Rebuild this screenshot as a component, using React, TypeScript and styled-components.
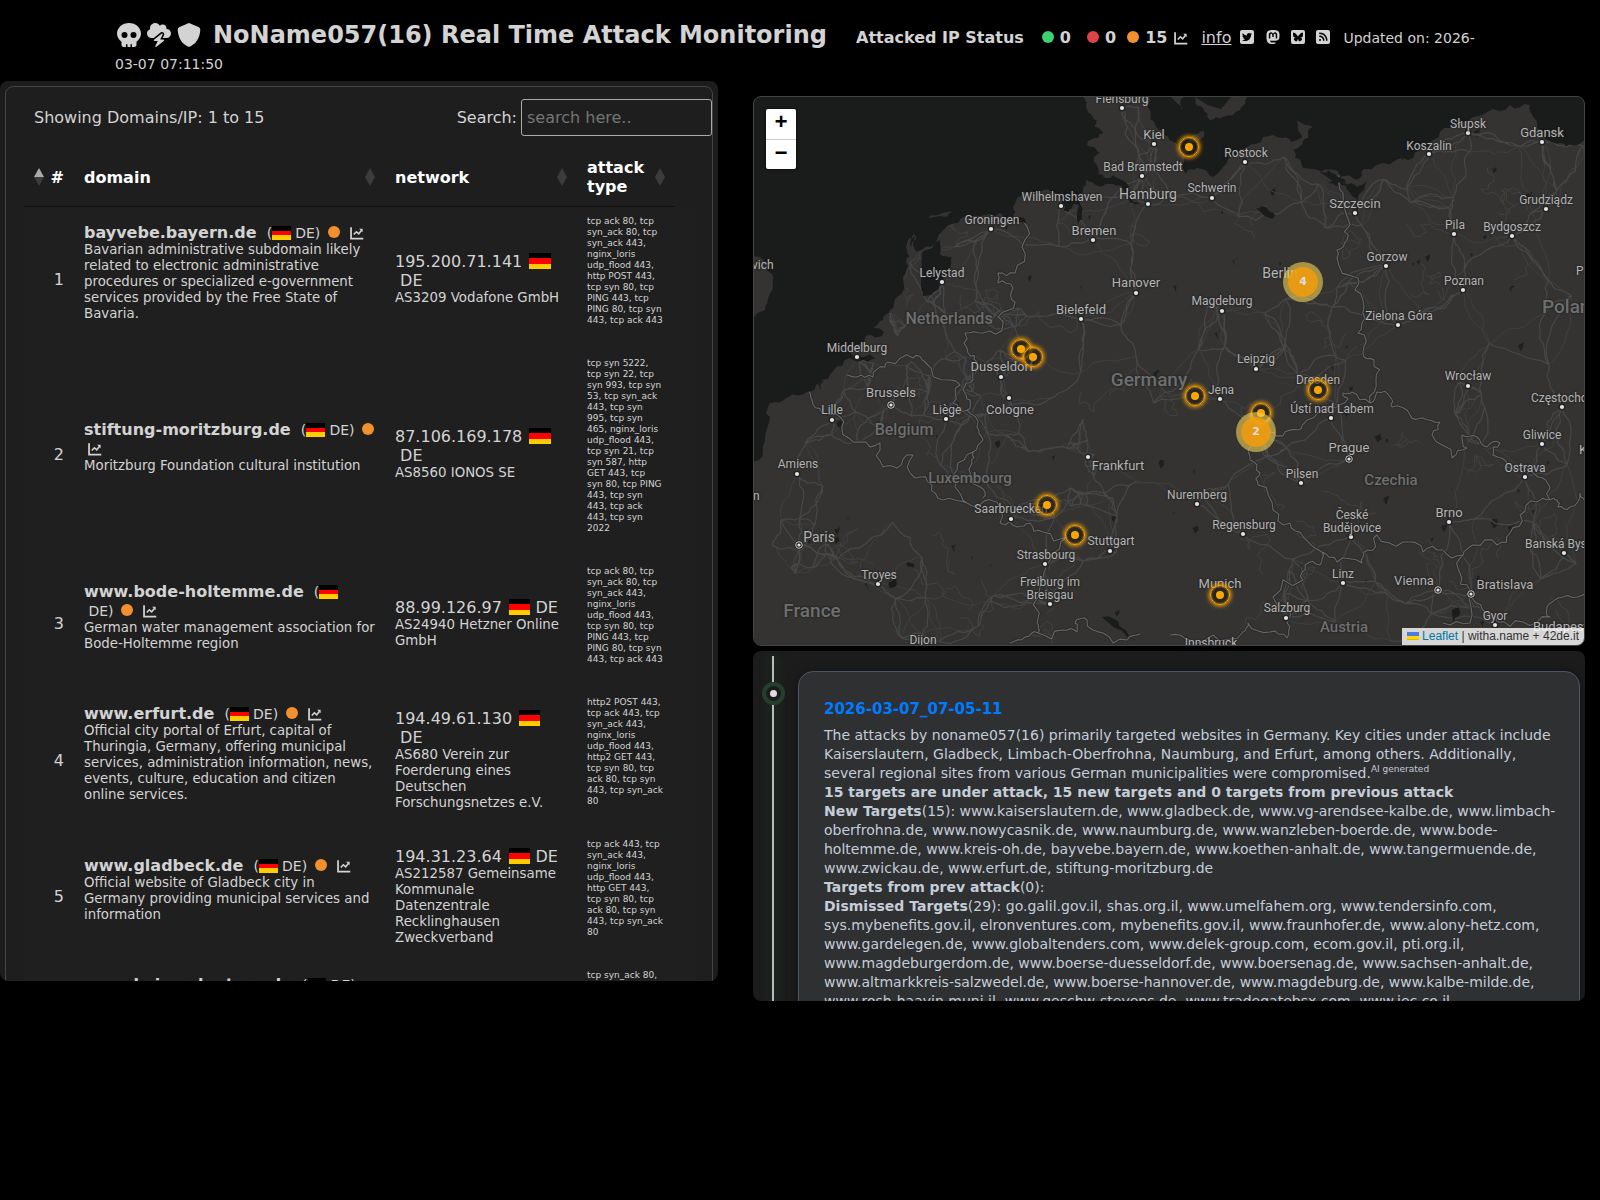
import React from "react";
import styled, { createGlobalStyle } from "styled-components";
import {
  FaSkull,
  FaCloudBolt,
  FaShield,
  FaCircle,
  FaSquareTwitter,
  FaMastodon,
  FaBluesky,
  FaSquareRss,
} from "react-icons/fa6";

/* ------------------------------------------------------------------ */
/* Base                                                                */
/* ------------------------------------------------------------------ */

const GlobalStyle = createGlobalStyle`
  * { box-sizing: border-box; }
  body {
    margin: 0;
    background: #000;
    color: #d3d3d3;
    font-family: Verdana, "DejaVu Sans", sans-serif;
    font-size: 16px;
  }
`;

const palette = {
  up: "#3dd16f",
  down: "#dd4449",
  unknown: "#f2902f",
};

/* ------------------------------------------------------------------ */
/* Header                                                              */
/* ------------------------------------------------------------------ */

const Header = styled.header`
  padding: 22px 115px 0;
  min-height: 81px;
  line-height: 26px;

  svg {
    vertical-align: -2px;
  }
`;

const Logo = styled.span`
  display: inline-flex;
  gap: 6px;
  padding: 0 2px;
  margin-right: 10px;
  font-size: 24px;
  vertical-align: -4px;
`;

const Title = styled.h1`
  display: inline;
  margin: 0 24px 0 0;
  font-size: 24px;
  font-weight: bold;
`;

const Status = styled.strong`
  margin-right: 18px;
`;

const Count = styled.strong<{ $gap: number }>`
  margin-right: ${(p) => p.$gap}px;

  svg {
    margin-right: 6px;
    font-size: 12px;
    vertical-align: 0;
  }
`;

const InfoLink = styled.a`
  margin: 0 8px 0 13px;
  color: inherit;
`;

const SocialLink = styled.a`
  margin-right: 10px;
  color: inherit;
`;

const BlueskyTile = styled.span`
  display: inline-flex;
  align-items: center;
  justify-content: center;
  width: 14px;
  height: 14px;
  border-radius: 2px;
  background: #d3d3d3;
  color: #000;
  font-size: 10px;
  line-height: 0;
  vertical-align: 1px;
`;

const Updated = styled.span`
  margin-left: 2px;
  font-size: 14px;
`;

const ChartIcon = () => (
  <svg width="14" height="14" viewBox="0 0 16 16" fill="none" aria-hidden="true">
    <path d="M1.2 1.5v12.8h14" stroke="currentColor" strokeWidth="2" />
    <path d="M4.3 9.8l3-3.2 2.6 2.3 3.4-4" stroke="currentColor" strokeWidth="1.8" />
    <path d="M10.4 3.2h4v4z" fill="currentColor" />
  </svg>
);

/* ------------------------------------------------------------------ */
/* Page grid                                                           */
/* ------------------------------------------------------------------ */

const Columns = styled.main`
  display: grid;
  grid-template-columns: 718fr 832fr;
  gap: 35px;
  align-items: start;
  padding-right: 15px;
`;

const Panel = styled.section`
  overflow: auto;
  scrollbar-width: none;
  border-radius: 8px;
  background: #1c1c1c;
`;

const TargetsPanel = styled(Panel)`
  height: 75vh;
  padding: 5px;
`;

const TargetsBox = styled.div`
  padding-top: 12px;
  border: 1px solid #444;
  border-radius: 8px;
  background: #1e1e1e;
`;

const SideColumn = styled.div`
  display: flex;
  flex-direction: column;
  gap: 5px;
  padding-top: 15px;
`;

/* ------------------------------------------------------------------ */
/* Targets table                                                       */
/* ------------------------------------------------------------------ */

const Toolbar = styled.div`
  display: flex;
  align-items: center;
  justify-content: space-between;
  margin-bottom: 12px;
  padding-left: 28px;
`;

const SearchLabel = styled.label`
  display: flex;
  align-items: center;
  gap: 4px;
`;

const SearchInput = styled.input`
  width: 191px;
  height: 37px;
  padding: 5px;
  border: 1px solid #aaa;
  border-radius: 3px;
  background: transparent;
  color: inherit;
  font: inherit;

  &::placeholder {
    color: #757575;
  }
`;

const TableWrap = styled.div`
  padding: 0 17px 0 18px;
`;

const Table = styled.table`
  width: 100%;
  table-layout: fixed;
  border-collapse: separate;
  border-spacing: 0;
`;

const Th = styled.th`
  padding: 10px;
  border-bottom: 1px solid #111;
  color: #fff;
  text-align: left;
`;

const SortButton = styled.button`
  display: flex;
  align-items: center;
  justify-content: space-between;
  gap: 6px;
  width: 100%;
  padding: 0;
  border: 0;
  background: none;
  color: inherit;
  font: inherit;
  line-height: 19px;
  text-align: left;
`;

const SortMark = styled.span<{ $asc?: boolean }>`
  flex: none;
  display: grid;

  &::before,
  &::after {
    content: "";
    border: 5px solid transparent;
  }
  &::before {
    border-top: 0;
    border-bottom: 9px solid ${(p) => (p.$asc ? "#aaa" : "#3c3c3c")};
  }
  &::after {
    border-bottom: 0;
    border-top: 9px solid #3c3c3c;
  }
`;

const Td = styled.td`
  padding: 9px 10px 7px;
  background: #1f1f1f;
  line-height: 19px;
`;

const IndexTd = styled(Td)`
  text-align: right;
`;

const DomainTd = styled(Td)`
  padding-bottom: 21px;
`;

const AttackTd = styled(Td)`
  padding-right: 32px;
  padding-bottom: 23px;
  font-size: 9px;
  line-height: 11px;
`;

const Note = styled.small`
  display: block;
  line-height: 16px;
`;

const Country = styled.span`
  margin-left: 5px;
  font-size: 14px;
  line-height: 14px;
`;

const Flag = styled.span`
  display: inline-block;
  width: 1.3333em;
  height: 1em;
  background: linear-gradient(#000 33.3%, #f00 33.3% 66.6%, #fc0 66.6%);
  vertical-align: -2px;
`;

const NetworkFlag = styled(Flag)`
  margin-left: 2px;
`;

const StateDot = styled(FaCircle)`
  margin-left: -1px;
  color: ${palette.unknown};
  font-size: 12px;
`;

const ChartLink = styled.a`
  color: inherit;
  font-size: 14px;
  line-height: 14px;
  text-decoration: none;

  svg {
    vertical-align: -2px;
  }
`;

type Target = {
  domain: string;
  note: string;
  ip: string;
  network: string;
  attacks: string;
};

const targets: Target[] = [
  {
    domain: "bayvebe.bayern.de",
    note: "Bavarian administrative subdomain likely related to electronic administrative procedures or specialized e-government services provided by the Free State of Bavaria.",
    ip: "195.200.71.141",
    network: "AS3209 Vodafone GmbH",
    attacks:
      "tcp ack 80, tcp syn_ack 80, tcp syn_ack 443, nginx_loris udp_flood 443, http POST 443, tcp syn 80, tcp PING 443, tcp PING 80, tcp syn 443, tcp ack 443",
  },
  {
    domain: "stiftung-moritzburg.de",
    note: "Moritzburg Foundation cultural institution",
    ip: "87.106.169.178",
    network: "AS8560 IONOS SE",
    attacks:
      "tcp syn 5222, tcp syn 22, tcp syn 993, tcp syn 53, tcp syn_ack 443, tcp syn 995, tcp syn 465, nginx_loris udp_flood 443, tcp syn 21, tcp syn 587, http GET 443, tcp syn 80, tcp PING 443, tcp syn 443, tcp ack 443, tcp syn 2022",
  },
  {
    domain: "www.bode-holtemme.de",
    note: "German water management association for Bode-Holtemme region",
    ip: "88.99.126.97",
    network: "AS24940 Hetzner Online GmbH",
    attacks:
      "tcp ack 80, tcp syn_ack 80, tcp syn_ack 443, nginx_loris udp_flood 443, tcp syn 80, tcp PING 443, tcp PING 80, tcp syn 443, tcp ack 443",
  },
  {
    domain: "www.erfurt.de",
    note: "Official city portal of Erfurt, capital of Thuringia, Germany, offering municipal services, administration information, news, events, culture, education and citizen online services.",
    ip: "194.49.61.130",
    network: "AS680 Verein zur Foerderung eines Deutschen Forschungsnetzes e.V.",
    attacks:
      "http2 POST 443, tcp ack 443, tcp syn_ack 443, nginx_loris udp_flood 443, http2 GET 443, tcp syn 80, tcp ack 80, tcp syn 443, tcp syn_ack 80",
  },
  {
    domain: "www.gladbeck.de",
    note: "Official website of Gladbeck city in Germany providing municipal services and information",
    ip: "194.31.23.64",
    network: "AS212587 Gemeinsame Kommunale Datenzentrale Recklinghausen Zweckverband",
    attacks:
      "tcp ack 443, tcp syn_ack 443, nginx_loris udp_flood 443, http GET 443, tcp syn 80, tcp ack 80, tcp syn 443, tcp syn_ack 80",
  },
  {
    domain: "www.kaiserslautern.de",
    note: "Official website of the city of Kaiserslautern in Germany, offering municipal services, administration information, news, events and citizen online services.",
    ip: "212.0.98.100",
    network: "AS8767 M-net Telekommunikations GmbH",
    attacks:
      "tcp syn_ack 80, nginx_loris udp_flood 443, tcp ack 443, tcp syn_ack 443, http2 GET 443, tcp syn 80, tcp PING 443, tcp ack 80, tcp syn 443",
  },
];

const TargetRow = ({ target, index }: { target: Target; index: number }) => (
  <tr>
    <IndexTd>{index}</IndexTd>
    <DomainTd>
      <strong>{target.domain}</strong>{" "}
      <Country>
        (<Flag />
        &nbsp;DE)&nbsp;&nbsp;
        <StateDot />
      </Country>{" "}
      <ChartLink href="#chart" aria-label={`History of ${target.domain}`}>
        &nbsp;
        <ChartIcon />
      </ChartLink>
      <Note>{target.note}</Note>
    </DomainTd>
    <Td>
      {target.ip} <NetworkFlag />
      &nbsp;DE
      <Note>{target.network}</Note>
    </Td>
    <AttackTd colSpan={2}>{target.attacks}</AttackTd>
  </tr>
);

const TargetsTable = () => (
  <Table>
    <colgroup>
      <col style={{ width: 50 }} />
      <col />
      <col style={{ width: 192 }} />
      <col style={{ width: 98 }} />
      <col style={{ width: 20 }} />
    </colgroup>
    <thead>
      <tr>
        <Th scope="col">
          <SortButton type="button">
            <SortMark $asc />#
          </SortButton>
        </Th>
        {["domain", "network", "attack type"].map((name) => (
          <Th scope="col" key={name}>
            <SortButton type="button">
              {name}
              <SortMark />
            </SortButton>
          </Th>
        ))}
        <td />
      </tr>
    </thead>
    <tbody>
      {targets.map((target, i) => (
        <TargetRow key={target.domain} target={target} index={i + 1} />
      ))}
    </tbody>
  </Table>
);

/* ------------------------------------------------------------------ */
/* Map                                                                 */
/* ------------------------------------------------------------------ */

type Point = [number, number];

/* World pixel coordinates of the map pane's top left corner. */
const ORIGIN: Point = [754, 97];
const VIEW: Point = [830, 548];

const mainland: Point[] = [
  [1083, 97], [1086, 106], [1087, 110], [1091, 114], [1097, 120], [1095, 127], [1103, 132], [1098, 138],
  [1087, 145], [1096, 149], [1100, 153], [1094, 158], [1097, 166], [1098, 174], [1106, 178], [1120, 179],
  [1128, 190], [1134, 202], [1140, 205], [1131, 203], [1124, 191], [1113, 184], [1098, 186], [1087, 180],
  [1083, 190], [1080, 200], [1082, 212], [1078, 224], [1079, 206], [1074, 204], [1068, 212], [1063, 211],
  [1062, 200], [1056, 193], [1040, 193], [1023, 192], [1017, 199], [1013, 207], [1013, 217], [1026, 221],
  [1028, 229], [1019, 222], [1006, 221], [1000, 213], [980, 216], [963, 217], [952, 224], [943, 230],
  [937, 240], [922, 250], [917, 252], [915, 237], [910, 238], [907, 250], [906, 262], [903, 277],
  [897, 297], [890, 310], [883, 320], [873, 327], [884, 332], [878, 337], [866, 336], [860, 344],
  [848, 346], [858, 356], [870, 354], [880, 360], [868, 362], [850, 358], [833, 371], [820, 383],
  [807, 392], [788, 397], [770, 403], [766, 413], [766, 432], [763, 452], [752, 462], [752, 647],
  [1586, 647], [1586, 141], [1573, 145], [1560, 143], [1547, 140], [1539, 130], [1534, 118], [1530, 105],
  [1510, 105], [1487, 112], [1468, 121], [1450, 128], [1433, 140], [1420, 150], [1403, 158], [1384, 163],
  [1367, 169], [1360, 178], [1345, 176], [1335, 174], [1322, 172], [1303, 168], [1295, 158], [1290, 148],
  [1300, 146], [1308, 138], [1313, 127], [1297, 121], [1298, 129], [1302, 137], [1291, 142], [1283, 138],
  [1263, 137], [1247, 147], [1236, 155], [1227, 163], [1213, 177], [1204, 170], [1197, 168], [1186, 174],
  [1184, 162], [1200, 140], [1204, 131], [1196, 134], [1183, 150], [1174, 142], [1163, 130], [1150, 119],
  [1148, 108], [1149, 97],
];

const islands: Point[][] = [
  [[752, 253], [765, 262], [769, 272], [773, 283], [769, 296], [765, 310], [752, 320]],
  [[1195, 97], [1247, 97], [1245, 101], [1240, 110], [1223, 117], [1210, 120], [1203, 108], [1196, 104]],
  [[910, 244], [914, 234], [916, 239], [912, 248]],
  [[928, 218], [942, 213], [952, 212], [940, 216]],
  [[1171, 97], [1184, 97], [1182, 110], [1177, 103]],
  [[1320, 172], [1340, 176], [1347, 184], [1334, 182]],
];

const lakes: Point[][] = [
  [[922, 252], [940, 240], [940, 254], [952, 257], [950, 266], [943, 278], [938, 290], [923, 296], [921, 284]],
  [[1340, 177], [1344, 183], [1357, 187], [1367, 180], [1362, 192], [1356, 202], [1358, 212], [1352, 196], [1346, 186], [1328, 183]],
  [[1256, 208], [1266, 207], [1275, 215], [1272, 219], [1262, 213]],
  [[906, 563], [913, 563], [914, 568], [908, 567]],
  [[888, 584], [896, 579], [897, 584], [890, 588]],
  [[1102, 617], [1112, 618], [1122, 628], [1136, 640], [1128, 638], [1112, 626]],
  [[1452, 610], [1459, 607], [1460, 614], [1453, 622]],
];

const borders: Point[][] = [
  [[1022, 220], [1022, 247], [1015, 273], [998, 273], [998, 283], [1013, 288], [1015, 302], [998, 317], [1003, 324], [983, 333], [965, 333], [968, 353], [977, 362], [973, 380], [963, 390], [970, 400], [967, 410], [977, 427], [983, 440], [973, 452], [972, 463], [980, 487], [983, 498]],
  [[973, 452], [957, 470], [955, 487], [967, 503], [983, 502], [990, 500], [1000, 523], [1017, 527], [1030, 523], [1043, 532], [1067, 537], [1050, 560], [1040, 587], [1037, 623], [1038, 633]],
  [[810, 388], [812, 400], [822, 413], [840, 417], [842, 428], [860, 442], [880, 443], [883, 467], [897, 468], [913, 455], [915, 478], [932, 485], [943, 500], [967, 503]],
  [[847, 375], [857, 377], [873, 377], [885, 367], [888, 362], [913, 358], [925, 362], [950, 380], [960, 385], [953, 403], [967, 410]],
  [[1038, 633], [1025, 637], [1010, 643]],
  [[1038, 633], [1063, 630], [1077, 632], [1075, 623], [1087, 620], [1103, 633], [1127, 640], [1140, 634]],
  [[1339, 175], [1343, 193], [1350, 225], [1347, 240], [1337, 250], [1337, 258], [1358, 278], [1355, 290], [1363, 313], [1358, 333], [1363, 353], [1374, 360], [1376, 380], [1370, 403]],
  [[1370, 403], [1352, 392], [1343, 393], [1348, 399], [1330, 406], [1307, 420], [1298, 430], [1283, 436], [1270, 432], [1248, 450], [1250, 460], [1260, 473], [1258, 485], [1273, 510], [1290, 523], [1303, 537], [1322, 552]],
  [[1322, 552], [1337, 562], [1362, 563], [1363, 552], [1373, 550], [1377, 535], [1403, 542], [1423, 552], [1443, 550], [1463, 555]],
  [[1322, 552], [1320, 565], [1305, 565], [1303, 580], [1273, 597], [1287, 623], [1287, 638], [1270, 632], [1248, 623], [1243, 632], [1213, 635], [1190, 640], [1170, 635]],
  [[1463, 555], [1460, 573], [1470, 590], [1470, 623], [1443, 623]],
  [[1463, 555], [1473, 545], [1497, 545], [1510, 533], [1520, 515], [1537, 502], [1550, 499]],
  [[1370, 403], [1377, 392], [1390, 397], [1392, 407], [1410, 415], [1423, 418], [1440, 422], [1432, 435], [1452, 458], [1467, 448], [1462, 435], [1477, 437], [1487, 447], [1500, 443], [1493, 455], [1507, 467], [1538, 477], [1550, 487], [1550, 500], [1557, 500], [1558, 507], [1570, 507], [1580, 493], [1584, 500]],
  [[1472, 598], [1487, 613], [1497, 622], [1523, 622], [1550, 617], [1547, 607], [1558, 598], [1578, 597], [1584, 590]],
];

type Place = {
  name: string;
  at: Point;
  size?: number;
  dot?: Point;
  capital?: boolean;
  country?: boolean;
  left?: boolean;
};

const places: Place[] = [
  { name: "Flensburg", at: [1122, 99], dot: [1122, 108] },
  { name: "Kiel", at: [1154, 135], size: 13, dot: [1154, 144] },
  { name: "Bad Bramstedt", at: [1143, 167], dot: [1142, 176] },
  { name: "Hamburg", at: [1148, 194], size: 14, dot: [1148, 204] },
  { name: "Wilhelmshaven", at: [1062, 197], dot: [1061, 206] },
  { name: "Groningen", at: [992, 220], dot: [991, 229] },
  { name: "Bremen", at: [1094, 231], size: 13, dot: [1093, 240] },
  { name: "vich", at: [752, 265], left: true },
  { name: "Lelystad", at: [942, 273], dot: [942, 282] },
  { name: "Hanover", at: [1136, 283], size: 13, dot: [1136, 293] },
  { name: "Bielefeld", at: [1081, 310], size: 13, dot: [1081, 319] },
  { name: "Netherlands", at: [949, 319], size: 16, country: true },
  { name: "Middelburg", at: [857, 348], dot: [857, 357] },
  { name: "Dusseldorf", at: [1002, 367], size: 13, dot: [1001, 377] },
  { name: "Rostock", at: [1246, 153], dot: [1245, 162] },
  { name: "Schwerin", at: [1212, 188], dot: [1212, 198] },
  { name: "Słupsk", at: [1468, 124], dot: [1468, 133] },
  { name: "Gdansk", at: [1542, 133], size: 13, dot: [1542, 142] },
  { name: "Koszalin", at: [1429, 146], dot: [1429, 154] },
  { name: "Szczecin", at: [1355, 204], size: 13, dot: [1355, 213] },
  { name: "Grudziądz", at: [1546, 200], dot: [1546, 209] },
  { name: "Pila", at: [1455, 225], dot: [1454, 234] },
  { name: "Bydgoszcz", at: [1512, 227], dot: [1512, 236] },
  { name: "Gorzow", at: [1387, 257], dot: [1386, 266] },
  { name: "Berlin", at: [1280, 273], size: 14 },
  { name: "Poznan", at: [1464, 281], dot: [1463, 290] },
  { name: "Po", at: [1576, 271], left: true },
  { name: "Magdeburg", at: [1222, 301], dot: [1222, 311] },
  { name: "Poland", at: [1542, 307], size: 19, country: true, left: true },
  { name: "Zielona Góra", at: [1399, 316], dot: [1398, 325] },
  { name: "Leipzig", at: [1256, 359], dot: [1256, 369] },
  { name: "Brussels", at: [891, 393], size: 13, dot: [891, 405], capital: true },
  { name: "Lille", at: [832, 410], dot: [832, 420] },
  { name: "Liège", at: [947, 410], dot: [946, 419] },
  { name: "Belgium", at: [904, 430], size: 16, country: true },
  { name: "Cologne", at: [1010, 410], size: 13, dot: [1009, 398] },
  { name: "Germany", at: [1149, 380], size: 19, country: true },
  { name: "Amiens", at: [798, 464], dot: [797, 474] },
  { name: "Luxembourg", at: [970, 478], size: 15, country: true },
  { name: "Frankfurt", at: [1118, 466], size: 13, dot: [1088, 457] },
  { name: "n", at: [753, 496], left: true },
  { name: "Saarbruecken", at: [1011, 509], dot: [1011, 519] },
  { name: "Paris", at: [819, 537], size: 14, dot: [799, 545], capital: true },
  { name: "Troyes", at: [879, 575], dot: [878, 584] },
  { name: "Stuttgart", at: [1111, 541], dot: [1110, 551] },
  { name: "Strasbourg", at: [1046, 555], dot: [1045, 564] },
  { name: "Freiburg im", at: [1050, 582] },
  { name: "Breisgau", at: [1050, 595], dot: [1050, 604] },
  { name: "France", at: [812, 611], size: 19, country: true },
  { name: "Dijon", at: [923, 640], size: 12 },
  { name: "Jena", at: [1221, 390], dot: [1220, 399] },
  { name: "Dresden", at: [1318, 380] },
  { name: "Ústí nad Labem", at: [1332, 409], dot: [1331, 418] },
  { name: "Wrocław", at: [1468, 376], size: 12, dot: [1468, 386] },
  { name: "Częstochowa", at: [1531, 398], dot: [1562, 407], left: true },
  { name: "Prague", at: [1349, 448], size: 13, dot: [1349, 459], capital: true },
  { name: "Gliwice", at: [1542, 435], dot: [1542, 444] },
  { name: "Kr", at: [1579, 450], size: 13, left: true },
  { name: "Ostrava", at: [1525, 468], dot: [1525, 477] },
  { name: "Pilsen", at: [1302, 474], dot: [1301, 483] },
  { name: "Czechia", at: [1391, 480], size: 15, country: true },
  { name: "Nuremberg", at: [1197, 495], size: 12, dot: [1197, 504] },
  { name: "Brno", at: [1449, 513], size: 13, dot: [1449, 522] },
  { name: "České", at: [1352, 515] },
  { name: "Budějovice", at: [1352, 528], dot: [1351, 537] },
  { name: "Regensburg", at: [1244, 525], dot: [1243, 534] },
  { name: "Banská Bystrica", at: [1525, 544], dot: [1564, 553], left: true },
  { name: "Linz", at: [1343, 574], dot: [1343, 583] },
  { name: "Munich", at: [1220, 584], size: 13 },
  { name: "Vienna", at: [1414, 581], size: 13, dot: [1438, 590], capital: true },
  { name: "Bratislava", at: [1505, 585], size: 13, dot: [1471, 594], capital: true },
  { name: "Salzburg", at: [1287, 608], dot: [1286, 618] },
  { name: "Gyor", at: [1495, 616], dot: [1495, 625] },
  { name: "Austria", at: [1344, 627], size: 15, country: true },
  { name: "Budapest", at: [1533, 627], size: 13, left: true },
  { name: "Innsbruck", at: [1211, 643] },
];

const pins: Point[] = [
  [1189, 147], [1021, 349], [1033, 357], [1195, 396], [1261, 413],
  [1318, 390], [1047, 505], [1075, 535], [1220, 595],
];

const clusters: { at: Point; count: number }[] = [
  { at: [1303, 282], count: 4 },
  { at: [1256, 432], count: 2 },
];

/* Small deterministic generator, so that the terrain is the same on every render. */
const makeRandom = (seed: number) => {
  let s = seed;
  return () => {
    s = (s * 1664525 + 1013904223) % 4294967296;
    return s / 4294967296;
  };
};

/* Longer segments are the edges of the sheet and stay straight. */
const LONGEST = 120;

const roughen = (points: Point[], amount: number, depth: number, random: () => number): Point[] => {
  if (depth === 0) return points;
  const out: Point[] = [points[0]];
  for (let i = 1; i < points.length; i++) {
    const [ax, ay] = points[i - 1];
    const [bx, by] = points[i];
    const length = Math.hypot(bx - ax, by - ay);
    if (length > 0 && length < LONGEST) {
      const shift = (random() - 0.5) * amount;
      out.push([(ax + bx) / 2 - shift * (by - ay), (ay + by) / 2 + shift * (bx - ax)]);
    }
    out.push(points[i]);
  }
  return roughen(out, amount, depth - 1, random);
};

const toPath = (points: Point[], closed = false) =>
  points.map(([x, y], i) => `${i ? "L" : "M"}${x.toFixed(1)} ${y.toFixed(1)}`).join("") + (closed ? "Z" : "");

const contains = (polygon: Point[], [x, y]: Point) => {
  let inside = false;
  for (let i = 0, j = polygon.length - 1; i < polygon.length; j = i++) {
    const [xi, yi] = polygon[i];
    const [xj, yj] = polygon[j];
    if (yi > y !== yj > y && x < ((xj - xi) * (y - yi)) / (yj - yi) + xi) inside = !inside;
  }
  return inside;
};

const buildTerrain = () => {
  const random = makeRandom(57);
  const coast = toPath(roughen(mainland, 0.5, 2, random), true);
  const isles = islands.map((p) => toPath(roughen(p, 0.5, 2, random), true)).join("");
  const water = lakes.map((p) => toPath(roughen(p, 0.4, 2, random), true)).join("");
  const frontier = borders.map((p) => toPath(roughen(p, 0.6, 2, random))).join("");

  const towns: Point[] = places.filter((p) => p.dot).map((p) => p.dot as Point);
  const scatter = (count: number, x: number, y: number, w: number, h: number) => {
    for (let i = 0; i < count; i++) {
      const town: Point = [x + random() * w, y + random() * h];
      if (contains(mainland, town)) towns.push(town);
    }
  };
  scatter(150, 754, 97, 830, 548);
  scatter(45, 870, 290, 150, 150);
  scatter(22, 1050, 440, 50, 80);
  scatter(14, 770, 515, 60, 60);

  let major = "";
  let minor = "";
  towns.forEach((town, i) => {
    towns
      .map((other, j) => ({ j, other, d: Math.hypot(other[0] - town[0], other[1] - town[1]) }))
      .filter(({ j }) => j !== i)
      .sort((a, b) => a.d - b.d)
      .slice(0, 4)
      .forEach(({ j, other }, rank) => {
        if (j < i && rank < 2) return;
        const line = toPath(roughen([town, other], 0.3, 3, random));
        if (rank < 3) major += line;
        else minor += line;
      });
  });

  let ponds = "";
  for (let i = 0; i < 90; i++) {
    const x = 770 + random() * 800;
    const y = 110 + random() * 530;
    const w = 2 + random() * 5;
    ponds += toPath(roughen([[x, y], [x + w, y - w / 2], [x + w / 2, y + w]], 0.7, 1, random), true);
  }

  let districts = "";
  for (let i = 0; i < 46; i++) {
    let x = 780 + random() * 780;
    let y = 200 + random() * 430;
    const line: Point[] = [[x, y]];
    for (let k = 0; k < 5; k++) {
      x += (random() - 0.5) * 44;
      y += (random() - 0.5) * 44;
      line.push([x, y]);
    }
    districts += toPath(roughen(line, 0.7, 2, random));
  }
  return { coast, isles, water, frontier, major, minor, ponds, districts };
};

const terrain = buildTerrain();

const Terrain = () => (
  <svg
    width={VIEW[0]}
    height={VIEW[1]}
    viewBox={`${ORIGIN[0]} ${ORIGIN[1]} ${VIEW[0]} ${VIEW[1]}`}
    fill="none"
    strokeLinejoin="round"
    aria-hidden="true"
  >
    <clipPath id="land">
      <path d={terrain.coast + terrain.isles} />
    </clipPath>
    <path d={terrain.coast + terrain.isles} fill="#343332" />
    <g clipPath="url(#land)">
      <path d={terrain.ponds} fill="#1e201f" />
      <path d={terrain.districts} stroke="#414141" />
      <path d={terrain.minor} stroke="#3f3f3f" />
      <path d={terrain.major} stroke="#474747" strokeWidth="1.2" />
      <path d={terrain.water} fill="#1a1c1b" />
      <path d={terrain.frontier} stroke="#2b2b2b" strokeWidth="3" />
      <path d={terrain.frontier} stroke="#676767" strokeWidth="1.1" />
    </g>
    {places
      .filter((p) => p.dot)
      .map(({ name, dot, capital }) => (
        <g key={name} transform={`translate(${dot![0]} ${dot![1]})`}>
          <circle r={capital ? 4.5 : 3.5} fill="#222" />
          {capital && <circle r="3.3" stroke="#ccc" />}
          <circle r={capital ? 1.6 : 2.1} fill="#e4e4e4" />
        </g>
      ))}
  </svg>
);

const MapPanel = styled.section`
  position: relative;
  height: 550px;
  overflow: hidden;
  border: 1px solid #444;
  border-radius: 8px;
  background: #1a1c1b;
`;

const MapPane = styled.div`
  position: absolute;
  top: 0;
  left: 50%;
  width: ${VIEW[0]}px;
  height: ${VIEW[1]}px;
  margin-left: -${VIEW[0] / 2}px;
`;

/* Things pinned to a point of the map pane. */
const Pinned = styled.span.attrs<{ $at: Point }>((p) => ({
  style: { left: p.$at[0] - ORIGIN[0], top: p.$at[1] - ORIGIN[1] },
}))<{ $at: Point }>`
  position: absolute;
`;

const PlaceName = styled(Pinned)<{ $size: number; $country?: boolean; $left?: boolean }>`
  transform: translate(${(p) => (p.$left ? "0" : "-50%")}, -50%);
  color: ${(p) => (p.$country ? "#6f6f6f" : "#b4b4b4")};
  font-family: Roboto, sans-serif;
  font-size: ${(p) => p.$size}px;
  font-weight: ${(p) => (p.$country ? 500 : 400)};
  line-height: 16px;
  text-shadow: 0 0 2px #222, 0 0 2px #222;
  white-space: nowrap;
`;

const Pin = styled(Pinned)`
  display: grid;
  place-items: center;
  width: 20px;
  height: 20px;
  margin: -10px 0 0 -10px;
  border: 1px solid #ffa500;
  border-radius: 50%;
  background: rgba(30, 30, 30, 0.6);
  box-shadow: 0 0 4px 1px #ffa500, inset 0 0 2px #ffa500;

  &::before {
    content: "";
    width: 8px;
    height: 8px;
    border-radius: 50%;
    background: #ffa500;
  }
`;

const Cluster = styled(Pinned)`
  display: grid;
  place-items: center;
  width: 40px;
  height: 40px;
  margin: -20px 0 0 -20px;
  border-radius: 50%;
  background: rgba(241, 211, 87, 0.6);
`;

const ClusterCount = styled.b`
  width: 30px;
  height: 30px;
  border-radius: 50%;
  background: rgba(240, 156, 12, 0.88);
  color: #ddd;
  font-size: 11px;
  line-height: 30px;
  text-align: center;
`;

const ZoomBar = styled.div`
  position: absolute;
  top: 12px;
  left: 12px;
  display: grid;
  border-radius: 2px;
  overflow: hidden;
  box-shadow: 0 0 2px 1px #111;
`;

const ZoomButton = styled.button`
  width: 30px;
  height: 30px;
  padding: 0;
  border: 0;
  background: #fff;
  color: #000;
  font: bold 22px/30px "Liberation Mono", monospace;

  & + & {
    border-top: 1px solid #ccc;
  }
`;

const Attribution = styled.div`
  position: absolute;
  right: 0;
  bottom: 0;
  padding: 0 5px;
  background: rgba(255, 255, 255, 0.8);
  color: #333;
  font: 12px/17px "Liberation Sans", Arial, sans-serif;

  a {
    color: #0078a8;
    text-decoration: none;
  }
`;

const FlagIcon = () => (
  <svg width="12" height="8" viewBox="0 0 12 8" aria-hidden="true">
    <path fill="#4c7be1" d="M0 0h12v4H0z" />
    <path fill="#ffd500" d="M0 4h12v3H0z" />
    <path fill="#e0bc00" d="M0 7h12v1H0z" />
  </svg>
);

const AttackMap = () => (
  <MapPanel aria-label="Attack map">
    <MapPane>
      <Terrain />
      {places.map((p) => (
        <PlaceName key={p.name} $at={p.at} $size={p.size ?? 12} $country={p.country} $left={p.left}>
          {p.name}
        </PlaceName>
      ))}
      {pins.map((at) => (
        <Pin key={at.join()} $at={at} />
      ))}
      {clusters.map(({ at, count }) => (
        <Cluster key={count} $at={at}>
          <ClusterCount>{count}</ClusterCount>
        </Cluster>
      ))}
    </MapPane>
    <ZoomBar>
      <ZoomButton type="button" aria-label="Zoom in">+</ZoomButton>
      <ZoomButton type="button" aria-label="Zoom out">−</ZoomButton>
    </ZoomBar>
    <Attribution>
      <a href="#leaflet">
        <FlagIcon /> Leaflet
      </a>{" "}
      | witha.name + 42de.it
    </Attribution>
  </MapPanel>
);

/* ------------------------------------------------------------------ */
/* Timeline                                                            */
/* ------------------------------------------------------------------ */

const TimelinePanel = styled(Panel)`
  display: grid;
  grid-template-columns: 40px 1fr;
  gap: 5px;
  height: 350px;
  padding: 5px 5px 0 0;
`;

const Rail = styled.div`
  display: flex;
  flex-direction: column;
  align-items: center;

  &::before,
  &::after {
    content: "";
    width: 2px;
    background: #bbb;
    box-shadow: 0 0 12px 2px rgba(40, 110, 60, 0.25);
  }
  &::before {
    height: 26px;
  }
  &::after {
    flex: 1;
  }
`;

const RailDot = styled.span`
  display: grid;
  place-items: center;
  width: 23px;
  height: 23px;
  margin: 0 0 -4px;
  border: 4px solid #24402c;
  border-radius: 50%;
  background: #1c1c1c;
  z-index: 1;

  &::before {
    content: "";
    width: 7px;
    height: 7px;
    border-radius: 50%;
    background: #ddd;
  }
`;

const Card = styled.article`
  margin-top: 15px;
  padding: 25px 10px 25px 25px;
  border: 1px solid #4a5568;
  border-radius: 15px;
  background: #2e3032;
  box-shadow: 0 0 12px rgba(0, 0, 0, 0.35);
  color: #c5cdd8;
  font-size: 14px;
  line-height: 19px;
`;

const CardTitle = styled.h2`
  margin: 0 0 4px;
  font-size: 15px;
  line-height: 25px;
  color: #007bff;
`;

const Text = styled.p`
  margin: 0;
`;

const Source = styled.sup`
  font-size: 9px;
  line-height: 0;
`;

const newTargets =
  "www.kaiserslautern.de, www.gladbeck.de, www.vg-arendsee-kalbe.de, www.limbach-oberfrohna.de, www.nowycasnik.de, www.naumburg.de, www.wanzleben-boerde.de, www.bode-holtemme.de, www.kreis-oh.de, bayvebe.bayern.de, www.koethen-anhalt.de, www.tangermuende.de, www.zwickau.de, www.erfurt.de, stiftung-moritzburg.de";

const dismissedTargets =
  "go.galil.gov.il, shas.org.il, www.umelfahem.org, www.tendersinfo.com, sys.mybenefits.gov.il, elronventures.com, mybenefits.gov.il, www.fraunhofer.de, www.alony-hetz.com, www.gardelegen.de, www.globaltenders.com, www.delek-group.com, ecom.gov.il, pti.org.il, www.magdeburgerdom.de, www.boerse-duesseldorf.de, www.boersenag.de, www.sachsen-anhalt.de, www.altmarkkreis-salzwedel.de, www.boerse-hannover.de, www.magdeburg.de, www.kalbe-milde.de, www.rosh-haayin.muni.il, www.geschw-stevens.de, www.tradegatebsx.com, www.iec.co.il";

const Timeline = () => (
  <TimelinePanel aria-label="Attack timeline">
    <Rail>
      <RailDot />
    </Rail>
    <Card>
      <CardTitle>2026-03-07_07-05-11</CardTitle>
      <Text>
        The attacks by noname057(16) primarily targeted websites in Germany. Key cities under attack include
        Kaiserslautern, Gladbeck, Limbach-Oberfrohna, Naumburg, and Erfurt, among others. Additionally, several
        regional sites from various German municipalities were compromised.<Source>AI generated</Source>
      </Text>
      <Text>
        <b>15 targets are under attack, 15 new targets and 0 targets from previous attack</b>
      </Text>
      <Text>
        <b>New Targets</b>(15): {newTargets}
      </Text>
      <Text>
        <b>Targets from prev attack</b>(0):
      </Text>
      <Text>
        <b>Dismissed Targets</b>(29): {dismissedTargets}
      </Text>
    </Card>
  </TimelinePanel>
);

/* ------------------------------------------------------------------ */
/* App                                                                 */
/* ------------------------------------------------------------------ */

export default function App() {
  return (
    <>
      <GlobalStyle />
      <Header>
        <Logo>
          <FaSkull />
          <FaCloudBolt />
          <FaShield />
        </Logo>
        <Title>NoName057(16) Real Time Attack Monitoring</Title>{" "}
        <Status>Attacked IP Status</Status>
        <Count $gap={16}>
          <FaCircle color={palette.up} />0
        </Count>
        <Count $gap={11}>
          <FaCircle color={palette.down} />0
        </Count>
        <Count $gap={7}>
          <FaCircle color={palette.unknown} />15
        </Count>
        <ChartIcon />
        <InfoLink href="#info">info</InfoLink>
        <SocialLink href="#twitter" aria-label="Twitter">
          <FaSquareTwitter />
        </SocialLink>
        <SocialLink href="#mastodon" aria-label="Mastodon">
          <FaMastodon />
        </SocialLink>
        <SocialLink href="#bluesky" aria-label="Bluesky">
          <BlueskyTile>
            <FaBluesky />
          </BlueskyTile>
        </SocialLink>
        <SocialLink href="#rss" aria-label="RSS feed">
          <FaSquareRss />
        </SocialLink>
        <Updated>Updated on: 2026-03-07 07:11:50</Updated>
      </Header>
      <Columns>
        <TargetsPanel aria-label="Targets">
          <TargetsBox>
            <Toolbar>
              <span>Showing Domains/IP: 1 to 15</span>
              <SearchLabel>
                Search:
                <SearchInput type="search" placeholder="search here.." />
              </SearchLabel>
            </Toolbar>
            <TableWrap>
              <TargetsTable />
            </TableWrap>
          </TargetsBox>
        </TargetsPanel>
        <SideColumn>
          <AttackMap />
          <Timeline />
        </SideColumn>
      </Columns>
    </>
  );
}
